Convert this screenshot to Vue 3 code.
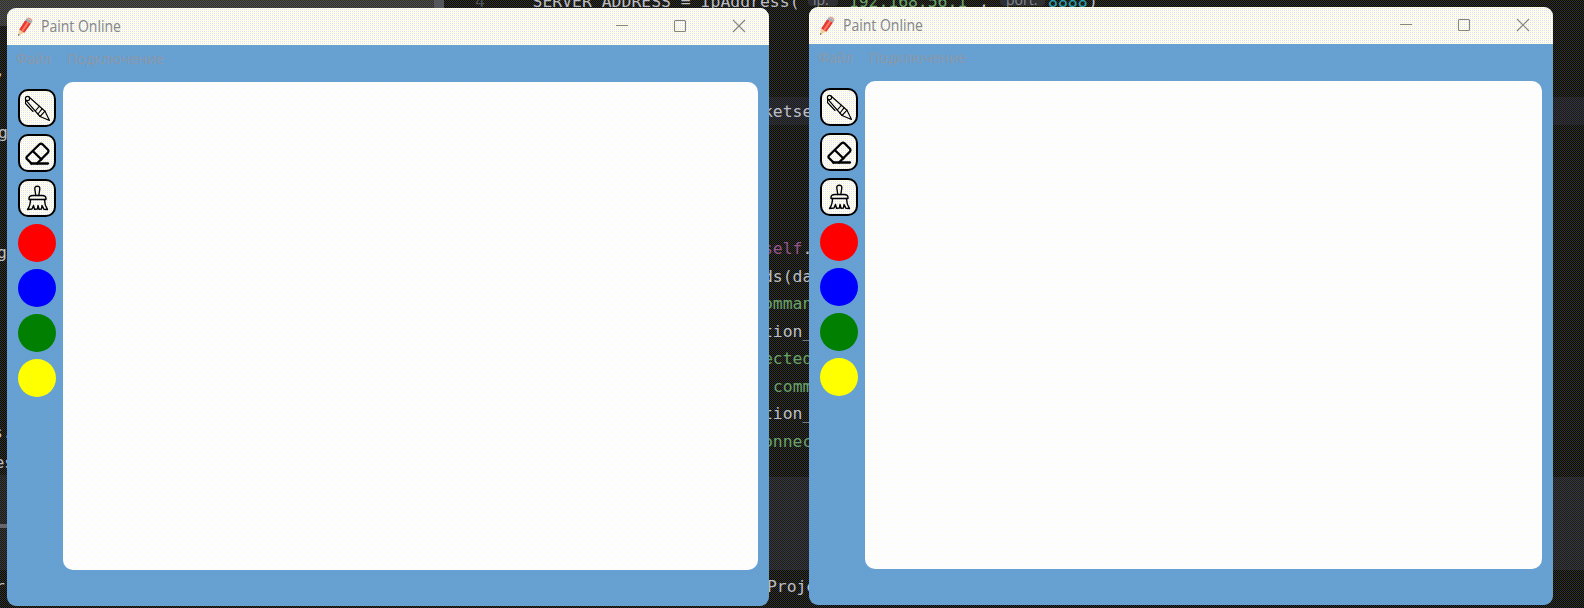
<script setup>
const windows = [
  { id: 'first', tone: 'win-a' },
  { id: 'second', tone: 'win-b' },
]
const tools = ['pen', 'eraser', 'brush']
const colors = ['red', 'blue', 'green', 'yellow']

const gapCode = [
  { y: 117, t: 'ketse', c: 'plain' },
  { y: 144, t: ')', c: 'plain', x: 761 },
  { y: 254, t: 'self', c: 'self', tail: '.' },
  { y: 282, t: 'ds(da', c: 'plain' },
  { y: 309, t: 'omman', c: 'str' },
  { y: 337, t: 'tion_', c: 'plain' },
  { y: 364, t: 'ected', c: 'str' },
  { y: 392, t: 'comm', c: 'str', x: 773 },
  { y: 419, t: 'tion_', c: 'plain' },
  { y: 447, t: 'onnec', c: 'str' },
  { y: 592, t: 'Proje', c: 'plain', x: 767 },
]
const edgeCode = [
  { y: 76, t: ',', x: -5 },
  { y: 138, t: 'g', x: -2 },
  { y: 258, t: 'g', x: -3 },
  { y: 438, t: 's.', x: -7 },
  { y: 468, t: 'es', x: -5.5 },
  { y: 592, t: 'r', x: -5 },
]
</script>

<template>
  <div class="desktop">
    <div class="tabs"></div>
    <div class="side"></div>
    <div class="line-band"></div>
    <div class="panel-band"></div>
    <div class="scroll"></div>
    <svg class="code" width="1584" height="608" viewBox="0 0 1584 608">
      <text x="475" y="7" class="dim">4</text>
      <text x="532.5" y="7" class="plain" textLength="267" xml:space="preserve">SERVER_ADDRESS = IpAddress(</text>
      <rect x="808" y="-10" width="30" height="16" rx="4" class="chip" />
      <text x="813" y="5" class="hint">ip:</text>
      <text x="839" y="7" class="str" textLength="138">'192.168.56.1'</text>
      <text x="979" y="7" class="plain">,</text>
      <rect x="1000" y="-10" width="45" height="16" rx="4" class="chip" />
      <text x="1006" y="5" class="hint">port:</text>
      <text x="1048" y="7" class="num" textLength="39.5">8888</text>
      <text x="1088" y="7" class="plain">)</text>
      <text v-for="l in gapCode" :key="l.y" :x="l.x || 763" :y="l.y" :class="l.c">{{ l.t }}<tspan v-if="l.tail" class="plain">{{ l.tail }}</tspan></text>
      <text v-for="l in edgeCode" :key="'e' + l.y" :x="l.x" :y="l.y" class="plain">{{ l.t }}</text>
      <rect x="0" y="524" width="7" height="4" class="bar" />
    </svg>

    <section v-for="w in windows" :key="w.id" class="window" :class="w.tone">
      <header class="titlebar">
        <svg class="pencil" width="16" height="20" viewBox="0 0 16 20">
          <path d="M1 19 L2.2 12.5 L7.2 15.6 Z" fill="#f2cf96" />
          <path d="M1 19 L1.4 17 L2.8 18 Z" fill="#555" />
          <path d="M2.2 12.5 L8.2 3.2 L14 6.4 L7.4 15.8 Z" fill="#e5392f" />
          <path d="M4.4 13.6 L10.4 4.4 L12.2 5.4 L6 14.7 Z" fill="#ff7765" />
          <path d="M8.2 3.2 L9.6 1.2 L15.3 4.5 L14 6.4 Z" fill="#9caab4" />
          <path d="M9.6 1.2 Q11 -0.2 13.4 1 Q16 2.5 15.3 4.5 Z" fill="#e0a596" />
        </svg>
        <svg class="title" width="84" height="24" viewBox="0 0 84 24">
          <text x="0" y="17" textLength="80" lengthAdjust="spacingAndGlyphs">Paint Online</text>
        </svg>
        <svg class="controls" width="136" height="16" viewBox="0 0 136 16">
          <path d="M2 6.5H14" />
          <rect x="60.5" y="1.5" width="11" height="11" rx="1" />
          <path d="M119 1L131 13M131 1L119 13" />
        </svg>
      </header>
      <svg class="menu" width="170" height="37" viewBox="0 0 170 37">
        <text x="9" y="19" textLength="35" lengthAdjust="spacingAndGlyphs">Файл</text>
        <text x="60" y="19" textLength="97" lengthAdjust="spacingAndGlyphs">Подключение</text>
      </svg>
      <main class="body">
        <nav class="toolbar">
          <button v-for="t in tools" :key="t" class="tool">
            <svg v-if="t === 'pen'" width="34" height="34" viewBox="0 0 34 34" class="thin">
              <path d="M9.3 6.2L25 20.2L29.5 29.5L20 25.5L6 9.3" />
              <path d="M15.3 20L19.3 15.3M18 23L22 17.8M20 25.5L25 20.2" />
              <path d="M5.7 9L5.5 12.5L13 20.5" />
              <circle cx="7.5" cy="7.5" r="2.1" />
            </svg>
            <svg v-else-if="t === 'eraser'" width="34" height="34" viewBox="0 0 34 34" class="thick">
              <path d="M11.5 27.5L6.7 22.7Q6 21.8 6.8 20.8L19.5 8.3Q21 7 22.5 8.3L28 13.8Q29 15 28 16.5L17 27.5" />
              <path d="M13 15.2L21.5 23.5M11 27.5H28" />
            </svg>
            <svg v-else width="34" height="34" viewBox="0 0 34 34" class="medium">
              <path d="M15.8 14.5L14.8 8Q14.6 5.2 17.3 5.2Q20 5.2 19.8 8L18.8 14.5" />
              <path d="M9 18.5V17.5Q9 14.5 13 14.5H22Q26 14.5 26 17.5V18.5Z" />
              <path d="M10.5 18.5Q10.5 24.5 7.5 28.5L12 28L13.5 24.5L14.5 28.3L17.4 28L18 24.5L19 28.3L21.5 28L22 24.5L24 28.3L27.5 28.5Q24.5 24 24.5 18.5" />
            </svg>
          </button>
          <button v-for="c in colors" :key="c" class="swatch" :class="c"></button>
        </nav>
        <div class="canvas"></div>
      </main>
    </section>
  </div>
</template>

<style>
body { overflow: hidden; background: #111; }
</style>

<style scoped>
.desktop {
  position: relative; width: 1584px; height: 608px; overflow: hidden;
  background: conic-gradient(#33330c 25%, #080808 0 50%, #303044 0 75%, #0c0c0c 0) 0 0 / 2px 2px;
}
.tabs, .side, .line-band, .panel-band, .scroll, .code { position: absolute; }
.tabs { left: 0; top: 0; width: 444px; height: 26px; background: conic-gradient(#4c4c3c 25%, #2c2c2c 0 50%, #4c4c60 0 75%, #333328 0) 0 0 / 2px 2px; }
.side { left: 0; top: 475px; width: 8px; height: 95px; background: rgba(70, 70, 78, 0.3); }
.line-band { left: 765px; top: 97px; width: 819px; height: 28px; background: rgba(58, 58, 84, 0.35); }
.panel-band { left: 765px; top: 477px; width: 819px; height: 93px; background: rgba(66, 66, 86, 0.35); }
.scroll { left: 434px; top: 0; width: 10px; height: 8px; background: #55565c; }
.code { left: 0; top: 0; font-family: "DejaVu Sans Mono", monospace; font-size: 16.4px; }
.plain { fill: #bcbec4; }
.dim { fill: #4b5059; }
.str { fill: #6aa26b; }
.self { fill: #94558d; }
.num { fill: #2aa0b0; }
.hint { fill: #868a91; font: 14px "Open Sans", sans-serif; }
.chip { fill: #2f3034; }
.bar { fill: #66676d; }

.window {
  position: absolute; display: flex; flex-direction: column; overflow: hidden; height: 598px; border-radius: 9px;
  background: conic-gradient(#66a8b8 25%, #6699ee 0 50%, #66a8b4 0 75%, #6699ee 0) 0 0 / 2px 2px;
}
.win-a { left: 7px; top: 8px; width: 762px; }
.win-b { left: 809px; top: 7px; width: 744px; }
.titlebar {
  display: flex; flex: none; align-items: center; height: 37px; padding: 0 19px 0 10px;
  background: conic-gradient(#ffffff 25%, #dedef0 0 50%, #ffffff 0 75%, #ffffd0 0) 0 0 / 2px 2px;
}
.pencil { flex: none; }
.title { flex: none; margin-left: 8px; font-family: "Open Sans", sans-serif; font-size: 15.5px; }
.title text { fill: #858588; }
.controls { margin-left: auto; flex: none; fill: none; stroke: #85857d; stroke-width: 1.1; }
.menu { flex: none; display: block; font-family: "Open Sans", sans-serif; font-size: 15px; }
.menu text { fill: #8c98a8; }
.body { flex: 1; display: flex; min-height: 0; padding: 0 11px 36px; }
.toolbar { flex: none; display: flex; flex-direction: column; gap: 7px; width: 45px; padding-top: 7px; box-sizing: border-box; }
.tool, .swatch { display: block; flex: none; width: 38px; height: 38px; padding: 0; margin: 0; box-sizing: border-box; }
.tool {
  border: 2px solid #000; border-radius: 10px;
  background: conic-gradient(#ffffff 25%, #e2e2f2 0 50%, #ffffff 0 75%, #ffffd4 0) 0 0 / 2px 2px;
}
.tool svg { display: block; fill: none; stroke: #000; stroke-linecap: round; stroke-linejoin: round; }
.thin { stroke-width: 1.15; }
.medium { stroke-width: 1.4; }
.thick { stroke-width: 2.3; }
.swatch { border: 0; border-radius: 50%; }
.red { background: #ff0000; }
.blue { background: #0000ff; }
.green { background: #007f00; }
.yellow { background: #ffff00; }
.canvas {
  flex: 1; border-radius: 10px;
  background:
    radial-gradient(circle at 0.5px 0.5px, #ffffb8 0.5px, transparent 0.6px) 0 2px / 8px 8px,
    radial-gradient(circle at 0.5px 0.5px, #ffffb8 0.5px, transparent 0.6px) 4px 6px / 8px 8px,
    #fdfdff;
}
</style>
